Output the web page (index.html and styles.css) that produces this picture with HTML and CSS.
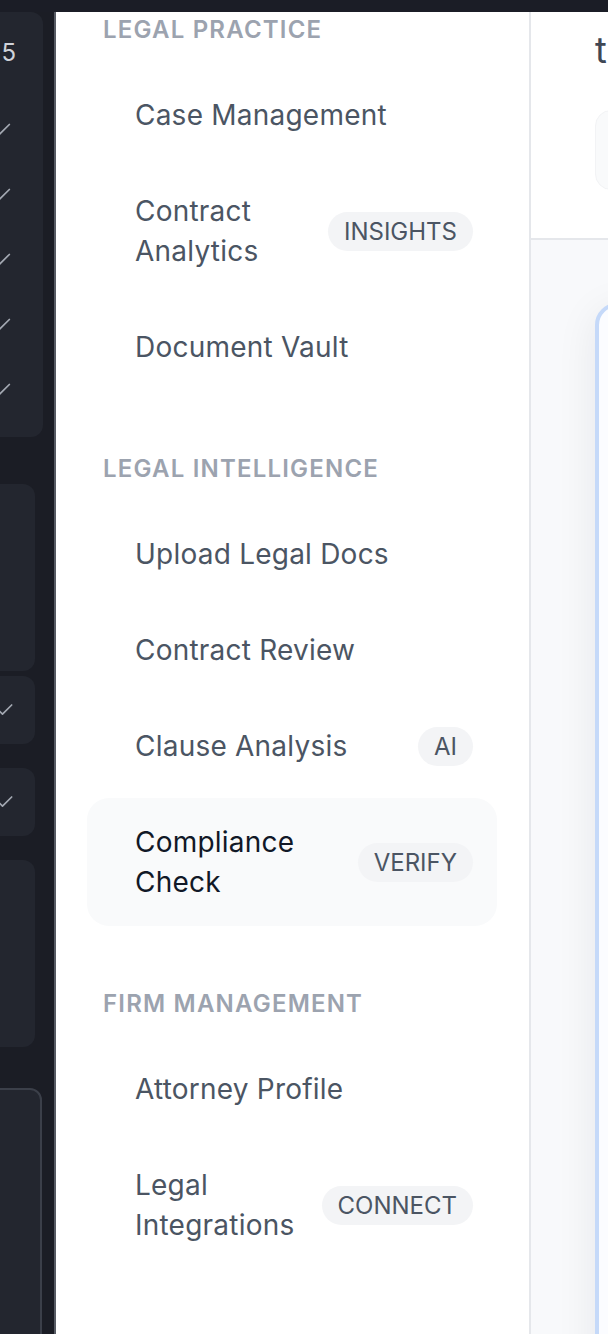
FILE: index.html
```html
<!DOCTYPE html>
<html lang="en">
<head>
<meta charset="utf-8">
<title>Legal Navigation</title>
<link rel="stylesheet" href="styles.css">
</head>
<body>
<div class="topbar"></div>
<div class="layout">
  <aside class="rail">
    <div class="rcard rcard-main">
      <div class="rnum">5</div>
      <ul class="rchecks">
        <li><svg class="chk chk-lg" viewBox="0 0 24 24"><polyline points="20 6 9 17 4 12"/></svg></li>
        <li><svg class="chk chk-lg" viewBox="0 0 24 24"><polyline points="20 6 9 17 4 12"/></svg></li>
        <li><svg class="chk chk-lg" viewBox="0 0 24 24"><polyline points="20 6 9 17 4 12"/></svg></li>
        <li><svg class="chk chk-lg" viewBox="0 0 24 24"><polyline points="20 6 9 17 4 12"/></svg></li>
        <li><svg class="chk chk-lg" viewBox="0 0 24 24"><polyline points="20 6 9 17 4 12"/></svg></li>
      </ul>
    </div>
    <div class="rcard rcard-tall rcard-a"></div>
    <div class="rcard rcard-short rcard-b"><svg class="chk" viewBox="0 0 24 24"><polyline points="20 6 9 17 4 12"/></svg></div>
    <div class="rcard rcard-short rcard-c"><svg class="chk" viewBox="0 0 24 24"><polyline points="20 6 9 17 4 12"/></svg></div>
    <div class="rcard rcard-tall rcard-d"></div>
    <div class="rcard rcard-outline"></div>
  </aside>

  <nav class="sidebar">
    <section class="group group-first">
      <h3 class="group-title">Legal Practice</h3>
      <ul class="items">
        <li class="item"><span class="label">Case Management</span></li>
        <li class="item"><span class="label">Contract Analytics</span><span class="badge">INSIGHTS</span></li>
        <li class="item"><span class="label">Document Vault</span></li>
      </ul>
    </section>
    <section class="group">
      <h3 class="group-title">Legal Intelligence</h3>
      <ul class="items">
        <li class="item"><span class="label">Upload Legal Docs</span></li>
        <li class="item"><span class="label">Contract Review</span></li>
        <li class="item"><span class="label">Clause Analysis</span><span class="badge">AI</span></li>
        <li class="item item-active"><span class="label">Compliance Check</span><span class="badge">VERIFY</span></li>
      </ul>
    </section>
    <section class="group">
      <h3 class="group-title">Firm Management</h3>
      <ul class="items">
        <li class="item"><span class="label">Attorney Profile</span></li>
        <li class="item"><span class="label">Legal Integrations</span><span class="badge">CONNECT</span></li>
      </ul>
    </section>
  </nav>

  <main class="main">
    <header class="main-head">
      <h1 class="main-title">t</h1>
      <div class="main-search"></div>
    </header>
    <div class="main-body">
      <div class="main-card"></div>
    </div>
  </main>
</div>
</body>
</html>
```

FILE: styles.css
```css
* { box-sizing: border-box; }

html, body {
  margin: 0;
  padding: 0;
  height: 1334px;
  overflow: hidden;
}

body {
  font-family: "Inter", "Noto Sans", "Liberation Sans", sans-serif;
  background: #1c1e26;
}

ul { list-style: none; margin: 0; padding: 0; }
h1, h3 { margin: 0; }

.topbar {
  height: 12px;
  background: #1b1d26;
}

.layout {
  display: flex;
  height: 1322px;
}

/* ---------- left dark rail ---------- */
.rail {
  width: 56px;
  flex: 0 0 56px;
  background: #1b1d25;
  border-right: 2px solid #575b64;
  overflow: hidden;
  display: flex;
  flex-direction: column;
}

.rcard {
  flex: 0 0 auto;
  width: 300px;
  background: #23262f;
  border-radius: 12px;
  display: flex;
  align-items: center;
  justify-content: flex-end;
}

.rcard-main {
  margin-left: -257px;
  height: 425px;
  flex-direction: column;
  align-items: stretch;
  justify-content: flex-start;
  padding-top: 24px;
}

.rnum {
  font-size: 24px;
  line-height: 34px;
  color: #cfd3da;
  text-align: right;
  padding-right: 27px;
}

.rchecks {
  margin-top: 27px;
}

.rchecks li {
  height: 65px;
  display: flex;
  align-items: center;
  justify-content: flex-end;
  padding-right: 30px;
}

.chk {
  width: 20px;
  height: 20px;
  fill: none;
  stroke: #a3a8b2;
  stroke-width: 2;
  stroke-linecap: round;
  stroke-linejoin: round;
}

.chk-lg {
  width: 22px;
  height: 22px;
  stroke-width: 1.9;
}

.rcard-tall {
  margin-left: -265px;
  height: 187px;
}

.rcard-short {
  margin-left: -265px;
  height: 68px;
  padding-right: 20px;
}

.rcard-a { margin-top: 47px; }
.rcard-b { margin-top: 5px; }
.rcard-c { margin-top: 24px; }
.rcard-d { margin-top: 24px; }

.rcard-outline {
  margin-left: -258px;
  margin-top: 41px;
  height: 400px;
  border: 2px solid #3b3f49;
  background: #23262f;
}

/* ---------- sidebar ---------- */
.sidebar {
  width: 475px;
  flex: 0 0 475px;
  background: #ffffff;
  border-right: 2px solid #e5e7eb;
  padding: 2px 32px 0 31px;
  overflow: hidden;
}

.group { margin-top: 62px; }
.group-first { margin-top: 0; }

.group-title {
  font-size: 24px;
  line-height: 32px;
  font-weight: 600;
  letter-spacing: 0.05em;
  text-transform: uppercase;
  color: #9ca3af;
  padding-left: 16px;
  margin-bottom: 25px;
}

.items {
  display: flex;
  flex-direction: column;
  gap: 8px;
}

.item {
  display: flex;
  align-items: center;
  justify-content: space-between;
  gap: 24px;
  padding: 24px 24px 24px 48px;
  border-radius: 22px;
  font-size: 28px;
  line-height: 40px;
  font-weight: 400;
  letter-spacing: 0.008em;
  color: #4b5563;
}

.item-active {
  background: #f9fafb;
  color: #111827;
}

.label { flex: 1 1 auto; min-width: 0; }

.badge {
  flex: 0 0 auto;
  font-size: 24px;
  line-height: 39px;
  font-weight: 400;
  letter-spacing: 0;
  padding: 0 16px;
  border-radius: 999px;
  background: #f3f4f6;
  color: #4b5563;
}

/* ---------- main ---------- */
.main {
  flex: 1 1 auto;
  min-width: 0;
  overflow: hidden;
  display: flex;
  flex-direction: column;
  background: #f8f9fb;
}

.main-head {
  height: 228px;
  flex: 0 0 228px;
  background: #ffffff;
  border-bottom: 2px solid #e5e7eb;
  padding: 16px 0 0 64px;
}

.main-title {
  font-size: 36px;
  line-height: 44px;
  font-weight: 400;
  color: #3f4754;
  white-space: nowrap;
}

.main-search {
  margin-top: 38px;
  width: 400px;
  height: 80px;
  border-radius: 16px;
  background: #f9fafb;
  border: 1px solid #f2f3f5;
}

.main-body {
  flex: 1 1 auto;
  padding: 63px 0 0 64px;
}

.main-card {
  width: 400px;
  height: 1200px;
  border: 4px solid #c5d9f9;
  border-radius: 22px;
  background: #fbfcff;
  box-shadow: 0 8px 40px rgba(17, 24, 39, 0.08);
}
```
